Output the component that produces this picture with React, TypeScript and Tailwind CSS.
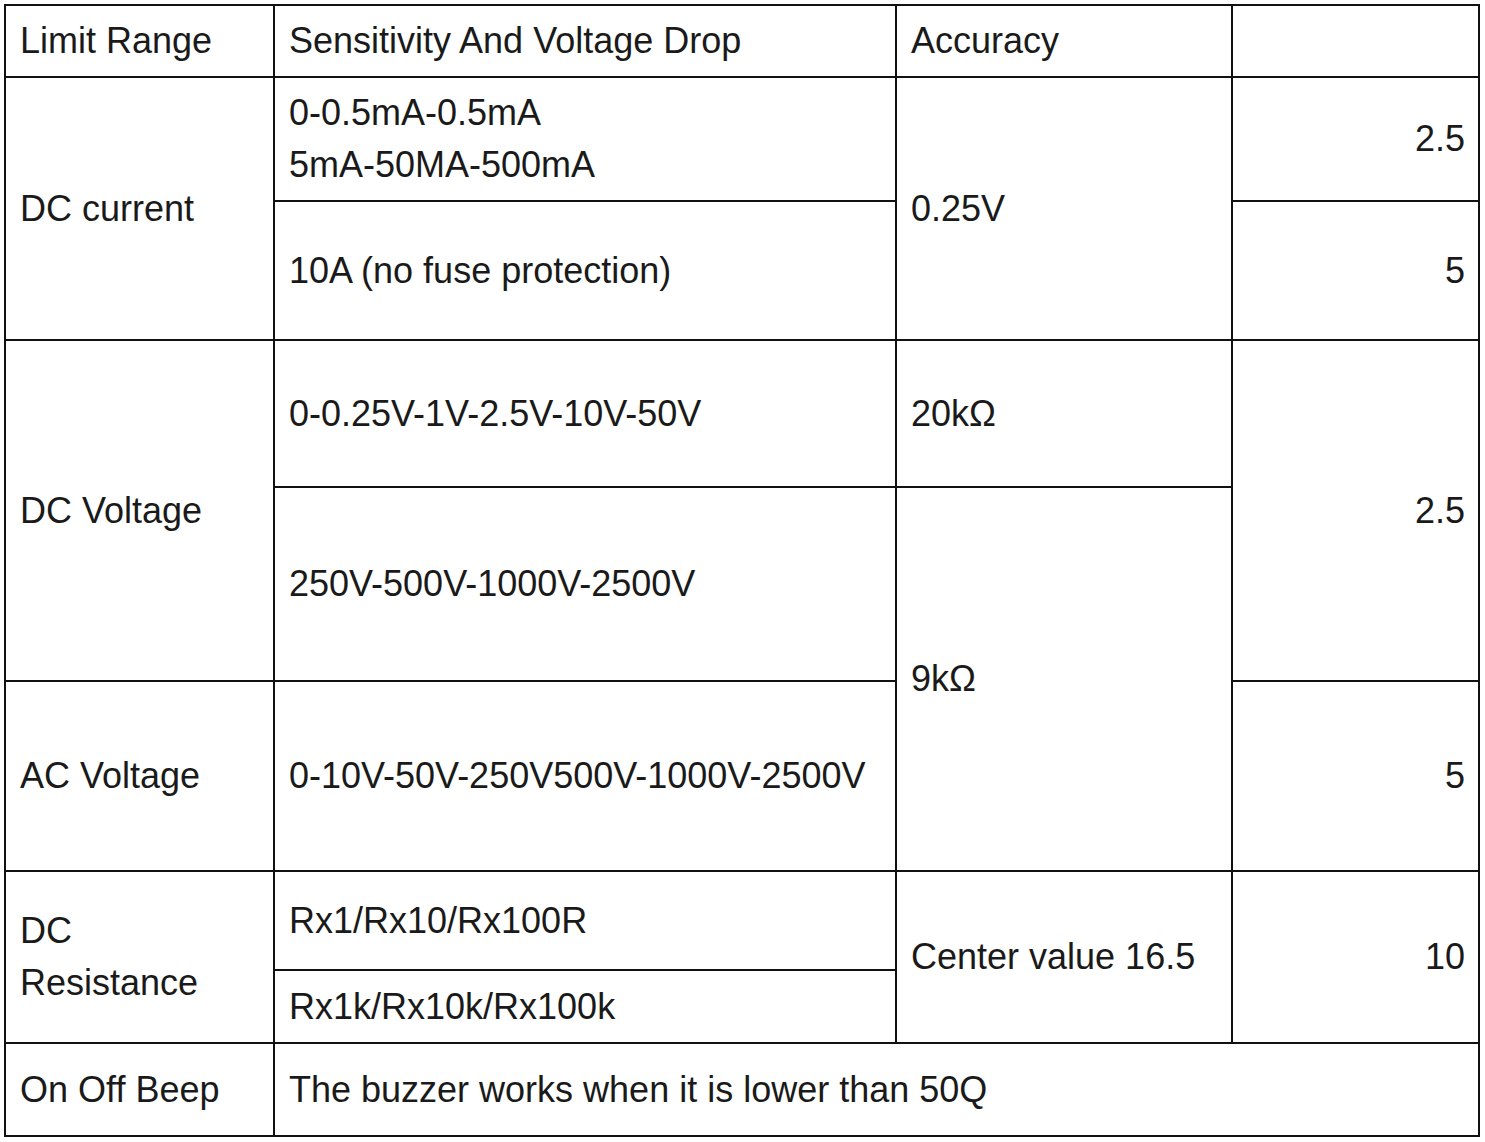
type Cell = {
  text: React.ReactNode;
  pos: string;
  align?: "left" | "right";
};

const cells: Cell[] = [
  { text: "Limit Range", pos: "col-start-1 row-start-1" },
  { text: "Sensitivity And Voltage Drop", pos: "col-start-2 row-start-1" },
  { text: "Accuracy", pos: "col-start-3 row-start-1" },
  { text: "", pos: "col-start-4 row-start-1" },

  { text: "DC current", pos: "col-start-1 row-start-2 row-span-2" },
  {
    text: (
      <>
        0-0.5mA-0.5mA
        <br />
        5mA-50MA-500mA
      </>
    ),
    pos: "col-start-2 row-start-2",
  },
  { text: "0.25V", pos: "col-start-3 row-start-2 row-span-2" },
  { text: "2.5", pos: "col-start-4 row-start-2", align: "right" },
  { text: "10A (no fuse protection)", pos: "col-start-2 row-start-3" },
  { text: "5", pos: "col-start-4 row-start-3", align: "right" },

  { text: "DC Voltage", pos: "col-start-1 row-start-4 row-span-2" },
  { text: "0-0.25V-1V-2.5V-10V-50V", pos: "col-start-2 row-start-4" },
  { text: "20kΩ", pos: "col-start-3 row-start-4" },
  { text: "2.5", pos: "col-start-4 row-start-4 row-span-2", align: "right" },
  { text: "250V-500V-1000V-2500V", pos: "col-start-2 row-start-5" },
  { text: "9kΩ", pos: "col-start-3 row-start-5 row-span-2" },

  { text: "AC Voltage", pos: "col-start-1 row-start-6" },
  { text: "0-10V-50V-250V500V-1000V-2500V", pos: "col-start-2 row-start-6" },
  { text: "5", pos: "col-start-4 row-start-6", align: "right" },

  {
    text: (
      <>
        DC
        <br />
        Resistance
      </>
    ),
    pos: "col-start-1 row-start-7 row-span-2",
  },
  { text: "Rx1/Rx10/Rx100R", pos: "col-start-2 row-start-7" },
  { text: "Center value 16.5", pos: "col-start-3 row-start-7 row-span-2" },
  { text: "10", pos: "col-start-4 row-start-7 row-span-2", align: "right" },
  { text: "Rx1k/Rx10k/Rx100k", pos: "col-start-2 row-start-8" },

  { text: "On Off Beep", pos: "col-start-1 row-start-9" },
  { text: "The buzzer works when it is lower than 50Q", pos: "col-start-2 row-start-9 col-span-3" },
];

export default function App() {
  return (
    <div className="min-h-[1142px] w-full bg-white pl-[4px] pt-[4px] font-['Liberation_Sans',Arial,sans-serif] text-[#1a1a1a]">
      <div className="grid w-max grid-cols-[267px_620px_334px_245px] grid-rows-[70px_122px_137px_145px_192px_188px_97px_71px_91px] gap-[2px] bg-[#111111] p-[2px]">
        {cells.map((c, i) => (
          <div
            key={i}
            className={`${c.pos} flex items-center bg-white pl-[14px] pr-[13px] text-[36px] leading-[52px] ${
              c.align === "right" ? "justify-end" : "justify-start"
            }`}
          >
            <span>{c.text}</span>
          </div>
        ))}
      </div>
    </div>
  );
}
